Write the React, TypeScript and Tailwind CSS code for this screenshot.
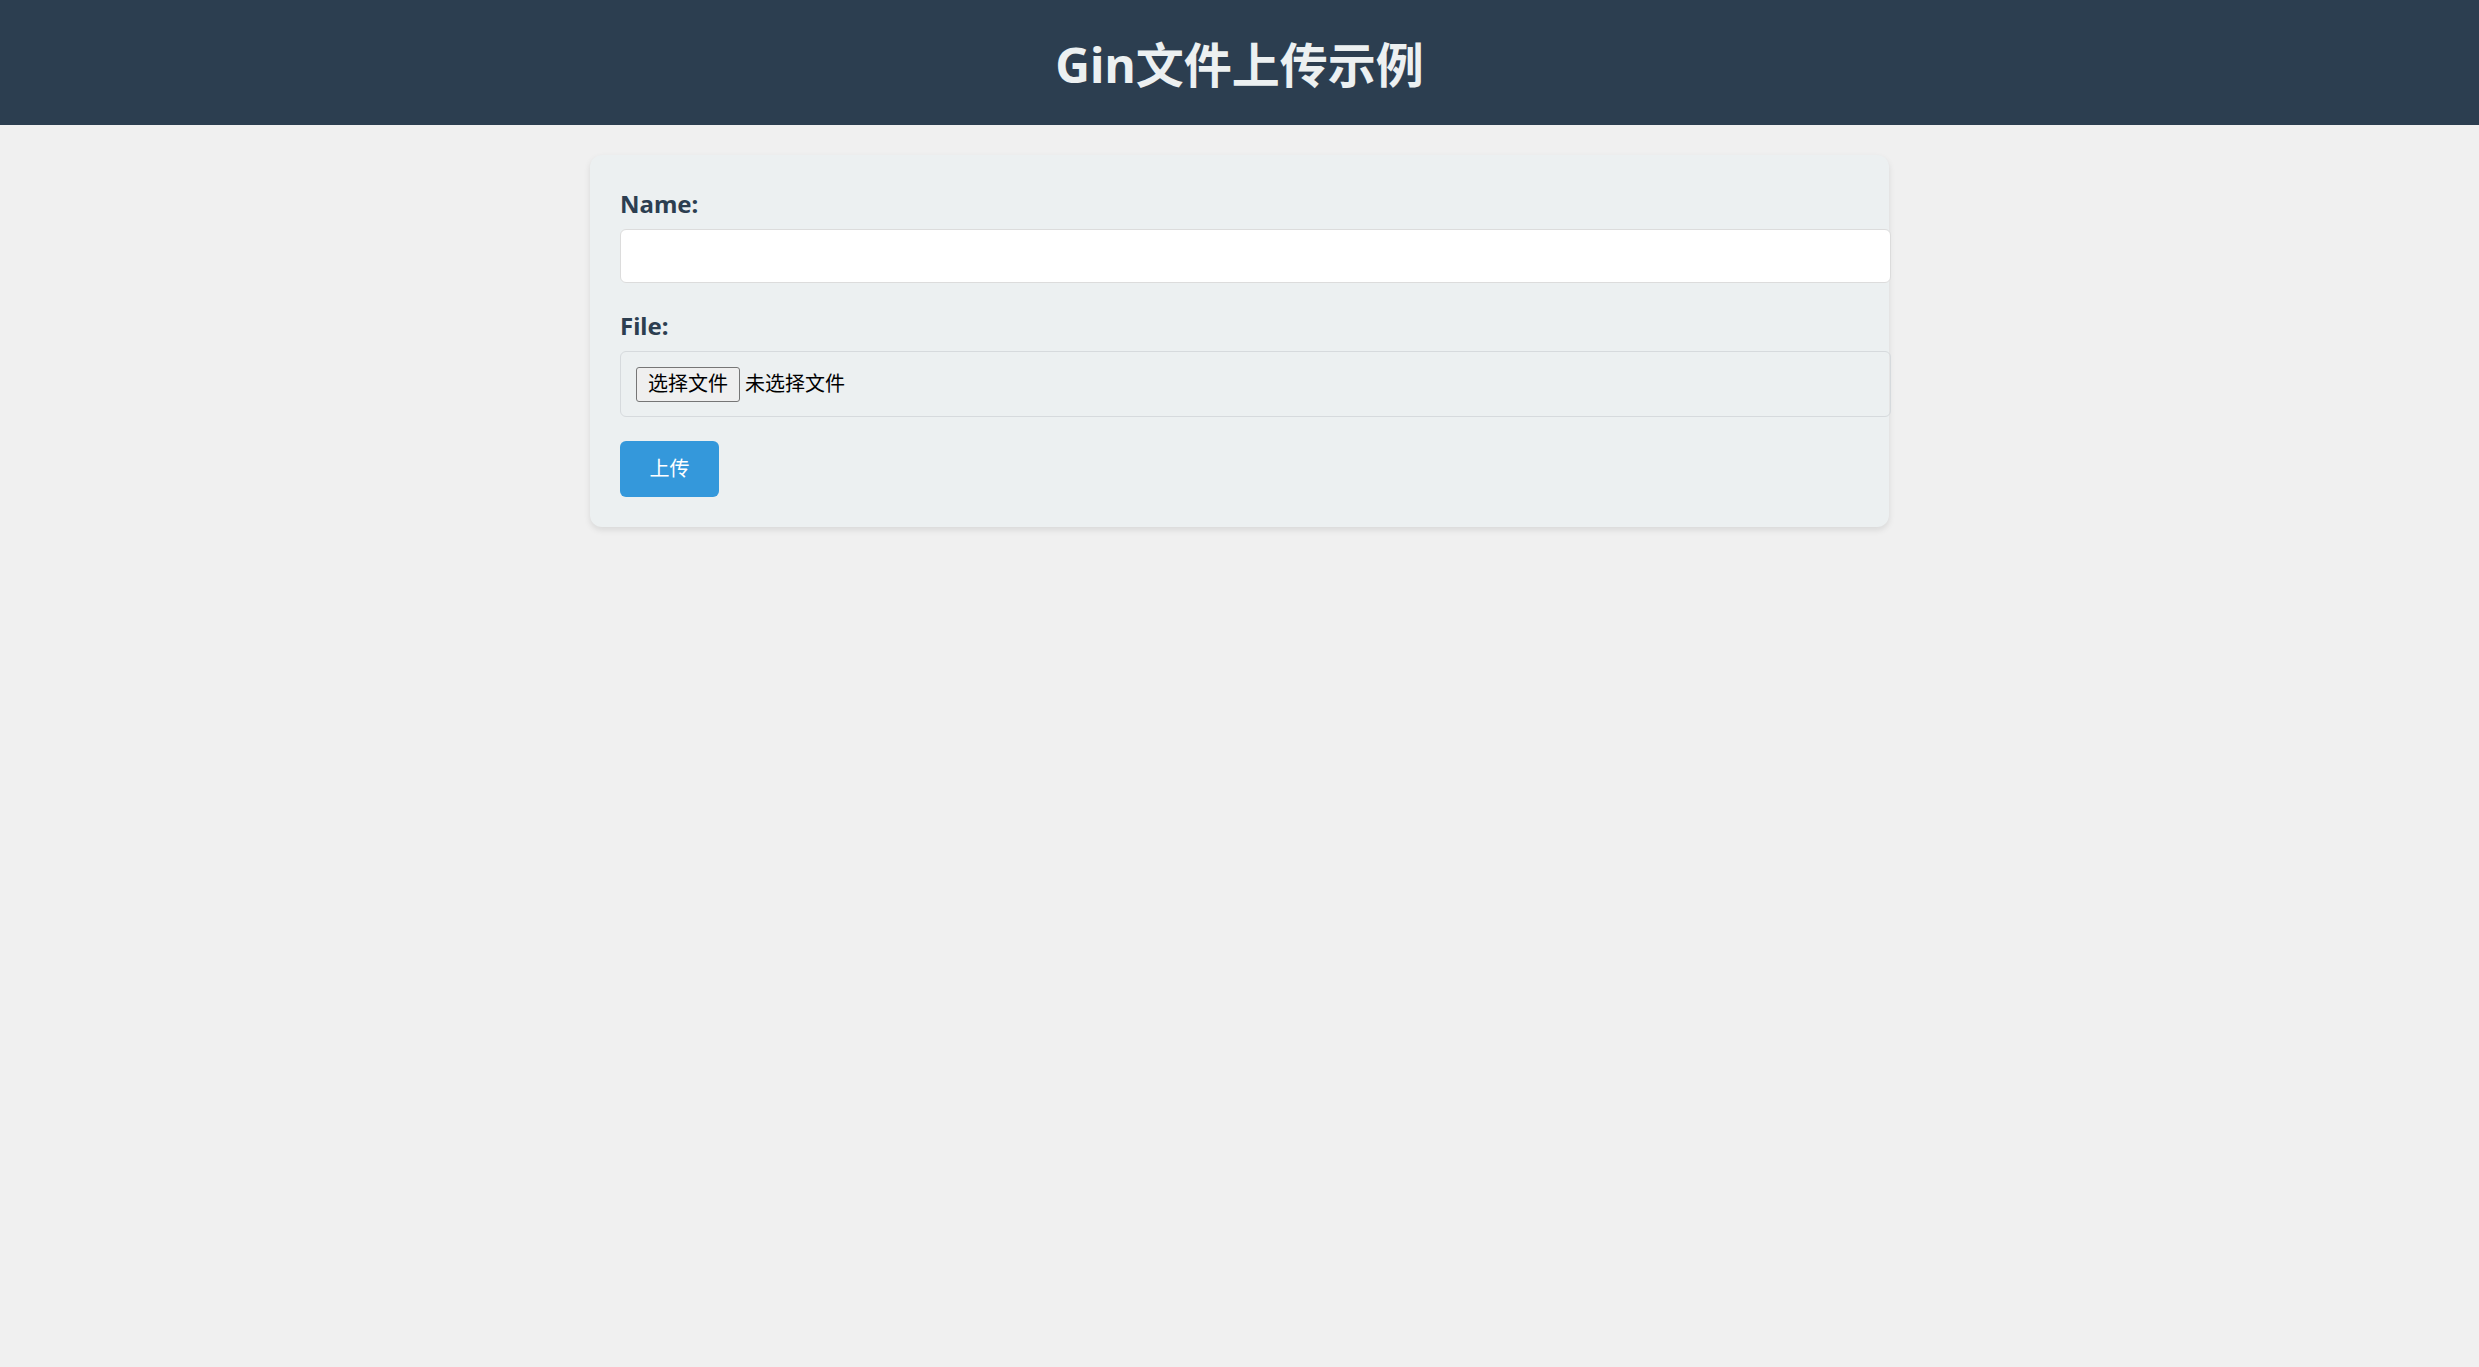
export default function App() {
    return (
        <div className="min-h-screen bg-[#f0f0f0] font-['Noto_Sans','Noto_Sans_CJK_SC',sans-serif]">
            {/* Header */}
            <header className="h-[125px] bg-[#2c3e50] flex items-center justify-center pt-[5px]">
                <h1 className="text-[48px] font-bold text-[#ecf0f1] leading-none">Gin文件上传示例</h1>
            </header>

            {/* Upload form */}
            <div className="w-[1299px] mx-auto mt-[30px] bg-[#ecf0f1] rounded-[12px] p-[30px] shadow-[0_3px_6px_rgba(0,0,0,0.1)]">
                <div className="mb-[24px]">
                    <label className="block h-[34px] leading-[34px] mb-[10px] pt-[2px] text-[24px] font-bold text-[#2c3e50]">Name:</label>
                    <input
                        type="text"
                        className="box-content block w-full h-[22px] px-[15px] py-[15px] bg-white border border-[#dcdcdc] rounded-[6px] outline-none text-[20px]"
                    />
                </div>

                <div className="mb-[24px]">
                    <label className="block h-[34px] leading-[34px] mb-[10px] pt-[2px] text-[24px] font-bold text-[#2c3e50]">File:</label>
                    <div className="box-content w-full h-[34px] p-[15px] border border-[#d6dadd] rounded-[6px] flex items-center">
                        <button className="h-[35px] w-[104px] bg-[#efefef] border border-[#767676] rounded-[3px] text-[20px] text-black leading-none">
                            选择文件
                        </button>
                        <span className="ml-[5px] text-[20px] text-black leading-none">未选择文件</span>
                    </div>
                </div>

                <button className="h-[56px] w-[99px] bg-[#3498db] text-white text-[20px] rounded-[6px] leading-none">
                    上传
                </button>
            </div>
        </div>
    );
}
